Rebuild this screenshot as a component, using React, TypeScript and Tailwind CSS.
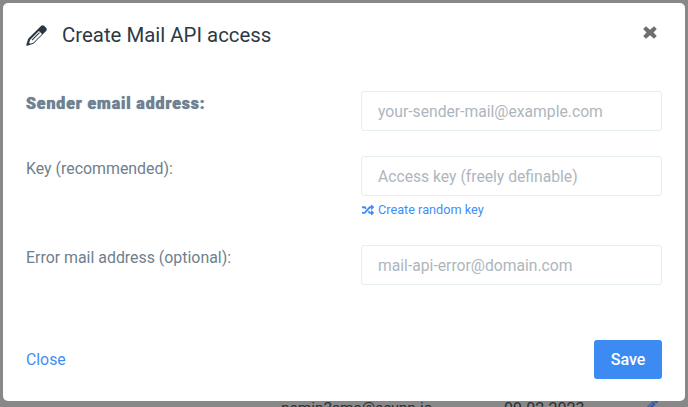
import React from 'react';
import { FaRandom, FaPencilAlt } from 'react-icons/fa';

const Pencil = () => (
  <svg width="21" height="21" viewBox="0 0 21 21" className="shrink-0 text-[#2b3640]">
    <path
      fill="currentColor"
      fillRule="evenodd"
      d="M15 .9c1-.9 2.400-.9 3.300 0l1.800 1.800c.9.9.9 2.300 0 3.200L7.400 18.700 1.300 20.700c-.6.1-1.100-.4-1-1L2.200 13.700zM4.200 14.700l-1 3.300.8.800 3.300-1 8.700-8.800-3.100-3.100zM5.600 14.700l7.500-7.500.8.800-7.500 7.500z"
    />
  </svg>
);

const CloseIcon = () => (
  <svg width="14" height="13" viewBox="0 0 14 13" className="text-[#6f6f6f]">
    <path fill="currentColor" d="M3 .3 7 3.700 11 .3 13.800 3 10.500 6.500 13.800 10 11 12.700 7 9.300 3 12.700.2 10 3.500 6.500.2 3z" />
  </svg>
);

const Field = ({ label, placeholder, bold }: { label: string; placeholder: string; bold?: boolean }) => (
  <div className="grid grid-cols-[335px_301px] items-start">
    <label
      className={
        bold
          ? 'pt-[2px] text-[16px] leading-[22px] font-black tracking-[0.85px] text-[#6f8092] [text-shadow:0_0_1px_#6f8092]'
          : 'pt-[2px] text-[15.9px] leading-[22px] text-[#6f7f8e]'
      }
    >
      {label}
    </label>
    <input
      placeholder={placeholder}
      className="h-[40px] w-full rounded-[3px] border border-[#e6edf1] bg-white px-4 text-[15.7px] outline-none placeholder:text-[#aeb6bd]"
    />
  </div>
);

export default function App() {
  return (
    <div className="relative h-[407px] w-[688px] overflow-hidden bg-[#888888] pt-[3px] pl-[3px] font-['Roboto',sans-serif]">
      {/* page behind the dialog */}
      <div className="absolute top-[399px] left-[281px] flex leading-[19px] text-[#2b2d30]">
        <span className="w-[223px] text-[15.4px]">nemin2sms@sevpn.io</span>
        <span className="text-[16px]">09.02.2023</span>
      </div>
      <FaPencilAlt className="absolute top-[399px] left-[646px] text-[#2f5f9e]" size={12} />

      <div className="relative flex h-[398px] w-[682px] flex-col rounded-[5px] bg-white">
        <div className="flex items-start justify-between pt-[17px] pr-[28px] pl-[23px]">
          <div className="flex items-center gap-[15px]">
            <Pencil />
            <h2 className="text-[20.4px] leading-[30px] text-[#2c3a46]">Create Mail API access</h2>
          </div>
          <div className="mt-[6px]">
            <CloseIcon />
          </div>
        </div>

        <div className="mt-[41px] flex flex-col pl-[23px]">
          <Field bold label="Sender email address:" placeholder="your-sender-mail@example.com" />
          <div className="mt-[25px]">
            <Field label="Key (recommended):" placeholder="Access key (freely definable)" />
          </div>
          <a className="mt-[6px] ml-[335px] flex items-center gap-[4px] pl-[1px] text-[12.7px] leading-[16px] text-[#3f8ef7]">
            <FaRandom size={12} />
            Create random key
          </a>
          <div className="mt-[27px]">
            <Field label="Error mail address (optional):" placeholder="mail-api-error@domain.com" />
          </div>
        </div>

        <div className="mt-auto flex items-center justify-between pr-[23px] pb-[22px] pl-[23px]">
          <a className="text-[15.8px] text-[#3f8ef7]">Close</a>
          <button className="h-[39px] w-[68px] rounded-[3px] bg-[#3b8bf3] text-[16px] font-medium text-white">
            Save
          </button>
        </div>
      </div>
    </div>
  );
}
